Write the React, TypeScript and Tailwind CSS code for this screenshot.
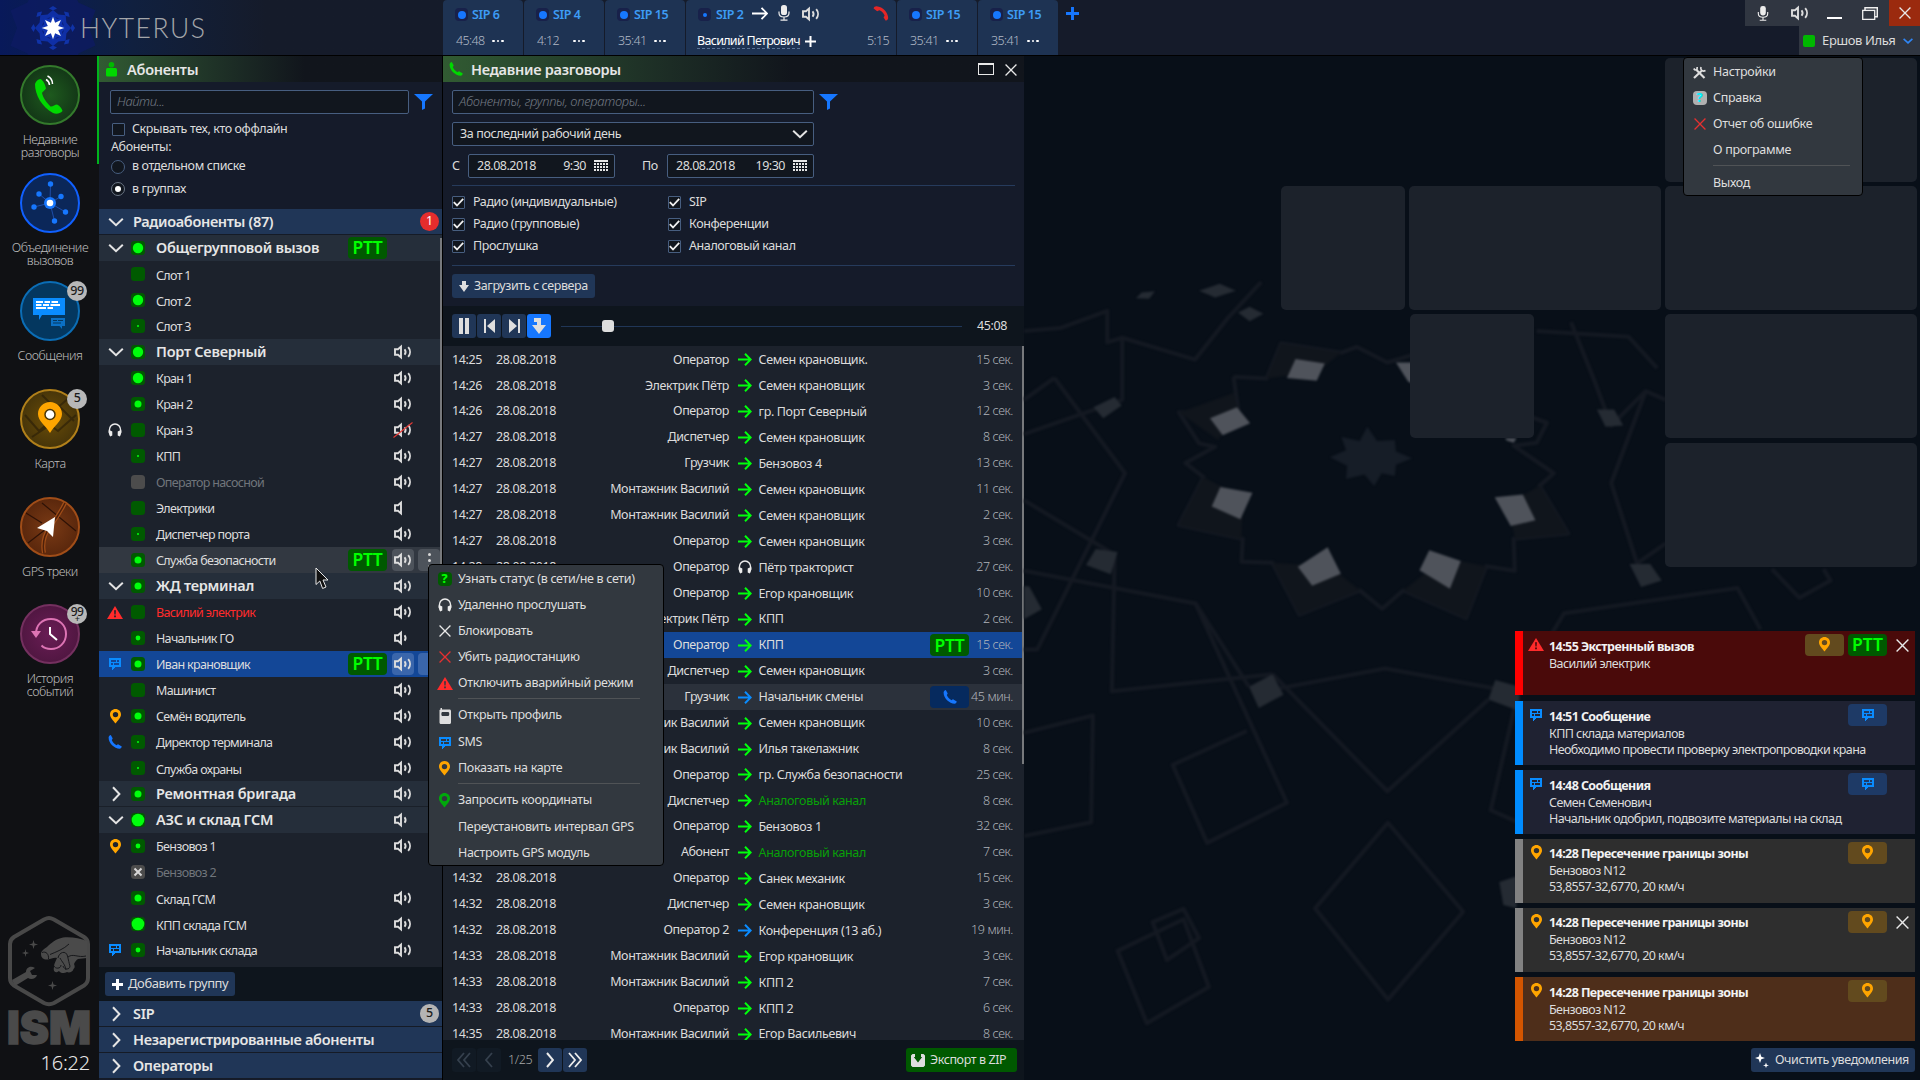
import React from 'react';

type IconProps = { className?: string };

/* ---------- Icons ---------- */

function Speaker({ level = 2, muted = false }: { level?: number; muted?: boolean }) {
  return (
    <svg width="20" height="16" viewBox="-1 -1 20 16" fill="none" stroke="#dedede" strokeWidth="1.9">
      <path d="M1 4.3H4L7 1.6V12.4L4 9.7H1Z" />
      {level > 0 && <path d="M10.6 4.2C11.9 6 11.9 8 10.6 9.8" />}
      {level > 1 && <path d="M14.2 2.2C16.6 5 16.6 9 14.2 11.8" />}
      {muted && <path d="M-0.5 14.5L18.5 -0.5" stroke="#e53935" strokeWidth="1.1" />}
    </svg>
  );
}

function Chevron({ dir, className = '' }: { dir: 'down' | 'right'; className?: string }) {
  return (
    <svg width="16" height="16" viewBox="0 0 16 16" fill="none" stroke="#e4e4e4" strokeWidth="2" className={className}>
      <path d={dir === 'down' ? 'M1.2 4.8L8 11.2L14.8 4.8' : 'M5 1.2L11.4 8L5 14.8'} />
    </svg>
  );
}

function Cross({ color = '#e8e8e8', size = 13 }: { color?: string; size?: number }) {
  return (
    <svg width={size} height={size} viewBox="0 0 13 13" stroke={color} strokeWidth="1.4">
      <path d="M.6 .6L12.4 12.4M12.4 .6L.6 12.4" />
    </svg>
  );
}

function Message({ bg = '#1c222c' }: { bg?: string }) {
  return (
    <svg width="12" height="12" viewBox="0 0 12 12" shapeRendering="crispEdges">
      <path d="M0 0H12V9H6L3 12V9H0Z" fill="#0a8cff" />
      <path d="M2 2h5v2H2zM8 2h2v2H8zM2 5h2v2H2zM5 5h5v2H5z" fill={bg} />
    </svg>
  );
}

function Pin({ color = '#ffa500' }: { color?: string }) {
  return (
    <svg width="11" height="15" viewBox="0 0 11 15">
      <path
        fillRule="evenodd"
        fill={color}
        d="M5.5 0C8.6 0 11 2.4 11 5.4C11 8.6 7.6 11.4 5.5 14.4C3.4 11.4 0 8.6 0 5.4C0 2.4 2.4 0 5.5 0ZM5.5 2.9A2.7 2.7 0 1 0 5.5 8.3A2.7 2.7 0 1 0 5.5 2.9Z"
      />
    </svg>
  );
}

function Handset({ color, size = 14, className = '' }: { color: string; size?: number; className?: string }) {
  return (
    <svg width={size} height={size} viewBox="0 0 14 14" className={className}>
      <path
        fill={color}
        d="M.6 2.2C.8 1.2 1.8 .2 2.8 0L4.6 3.2C4.8 3.8 4 4.4 3.8 5C4.4 7 6.6 9.4 8.6 10.2C9.2 10 9.8 9.2 10.4 9.4L13.8 11.4C13.6 12.4 12.8 13.4 11.6 13.8C6.4 13.6 .4 8 .6 2.2Z"
      />
    </svg>
  );
}

function Headphones() {
  return (
    <svg width="14" height="14" viewBox="0 0 14 14">
      <path d="M1.4 10V7C1.4 3.6 3.8 1 7 1S12.600 3.600 12.600 7V10" fill="none" stroke="#ececec" strokeWidth="1.4" />
      <path d="M.6 7.600H2.200L4.300 8.600V12.600L2.200 13.400C1 12.400 .6 9.600 .6 7.600ZM13.400 7.600H11.800L9.700 8.600V12.600L11.800 13.400C13 12.400 13.400 9.600 13.400 7.600Z" fill="#ececec" />
    </svg>
  );
}

function Warning({ mark = '#1c222c' }: { mark?: string }) {
  return (
    <svg width="16" height="13" viewBox="0 0 16 13">
      <path d="M8 0L16 13H0Z" fill="#ff2b2b" />
      <path d="M7.100 4.200H8.900L8.600 8.500H7.400ZM7.100 9.500H8.900V11.200H7.100Z" fill={mark} />
    </svg>
  );
}

function Arrow({ color }: { color: string }) {
  return (
    <svg width="14" height="13" viewBox="0 0 14 13" fill="none" stroke={color} strokeWidth="2">
      <path d="M0 6.500H12.500M7 .8L12.700 6.500L7 12.200" />
    </svg>
  );
}

function Funnel() {
  return (
    <svg width="19" height="16" viewBox="0 0 19 16">
      <path d="M0 0H19L11 7.500V14.500L8 16V7.500Z" fill="#1677ff" />
    </svg>
  );
}

function Calendar() {
  return (
    <svg width="14" height="12" viewBox="0 0 14 12" shapeRendering="crispEdges" fill="#e6e6e6">
      <path d="M0 0h14v2H0z" />
      {[3, 6, 9].map((y) => [0, 3, 6, 9, 12].map((x) => <rect key={x + '-' + y} x={x} y={y} width="2" height="2" />))}
    </svg>
  );
}

function Mic({ className = '' }: IconProps) {
  return (
    <svg width="12" height="16" viewBox="0 0 12 16" className={className}>
      <rect x="3" y="0" width="6" height="10" rx="2.600" fill="#ececec" />
      <path d="M1 6.500V8C1 10.500 3 12 6 12S11 10.500 11 8V6.500M6 12V15M2.500 15.200H9.500" fill="none" stroke="#ececec" strokeWidth="1.200" />
    </svg>
  );
}

function Plus({ color = '#fff', size = 11, w = 3 }: { color?: string; size?: number; w?: number }) {
  return (
    <svg width={size} height={size} viewBox="0 0 11 11" stroke={color} strokeWidth={w}>
      <path d="M5.500 0V11M0 5.500H11" />
    </svg>
  );
}

function Radio() {
  return (
    <svg width="12" height="16" viewBox="0 0 12 16">
      <path fillRule="evenodd" fill="#dedede" d="M1.500 0H3V1.500H10.500C11.400 1.500 12 2.200 12 3V14.500C12 15.300 11.400 16 10.500 16H2C1 16 .5 15.300 .5 14.500V2L1.500 1.500ZM3 4L2.400 5V7L3 8H9.500L10.200 7V5L9.500 4Z" />
    </svg>
  );
}

function Tools() {
  return (
    <svg width="13" height="13" viewBox="0 0 13 13" fill="none" stroke="#dedede">
      <path d="M3.500 4L11.500 12" strokeWidth="2.200" />
      <path d="M1 12L9 4.500" strokeWidth="2.200" />
      <path d="M.8 2.500C2 4.800 4.500 4.500 4.200 1" strokeWidth="1.700" />
      <path d="M8 1C7 4 9.500 6 12.500 4.500" strokeWidth="1.700" />
    </svg>
  );
}

/* ---------- Small widgets ---------- */

function Ptt() {
  return (
    <div className="flex h-[22px] w-[39px] shrink-0 items-center justify-center rounded bg-[#005900] text-[17.5px] font-semibold leading-none text-[#00ff00]">
      PTT
    </div>
  );
}

type DotKind = 'off' | 'full' | 'mid' | 'small' | 'tiny' | 'big' | 'grey' | 'x';

function Dot({ kind }: { kind: DotKind }) {
  const r: Record<string, number> = { full: 5.200, mid: 3.500, small: 2.400, tiny: 1, big: 6.300 };
  return (
    <svg width="14" height="14" viewBox="0 0 14 14" className="shrink-0">
      <rect width="14" height="14" rx="3.500" fill={kind === 'grey' || kind === 'x' ? '#4c4c4c' : '#005a00'} />
      {r[kind] && <circle cx="7" cy="7" r={r[kind]} fill="#00ff0c" />}
      {kind === 'x' && <path d="M3.500 3.500L10.500 10.500M10.500 3.500L3.500 10.500" stroke="#d8d8d8" strokeWidth="2" />}
    </svg>
  );
}

function Check({ on = true }: { on?: boolean }) {
  return (
    <div className="flex h-[13px] w-[13px] shrink-0 items-center justify-center rounded-[1px] border border-[#475e80] bg-[#11161e]">
      {on && (
        <svg width="11" height="9" viewBox="0 0 11 9" fill="none" stroke="#f0f0f0" strokeWidth="1.800">
          <path d="M.8 4.200L4 7.500L10.200 .8" />
        </svg>
      )}
    </div>
  );
}

/* ---------- Top bar ---------- */

function starPoints(cx: number, cy: number, R: number, r: number, n: number, rot = 0) {
  return Array.from({ length: n * 2 }, (_, i) => {
    const a = (Math.PI * i) / n - Math.PI / 2 + rot;
    const q = i % 2 ? r : R;
    return (cx + q * Math.cos(a)).toFixed(1) + ',' + (cy + q * Math.sin(a)).toFixed(1);
  }).join(' ');
}

function Logo() {
  return (
    <div className="flex h-[55px] w-[443px] items-center bg-gradient-to-r from-[#08195a] via-[#10203f] via-30% to-[#151b2a] to-60%">
      <svg width="96" height="55" viewBox="0 0 96 55" className="shrink-0">
        <polygon points={starPoints(53, 28, 46, 36, 8, 0.390)} fill="#0d1b63" opacity=".75" />
        <polygon points={starPoints(53, 28, 18, 14.500, 8)} fill="#0f2fa5" />
        <circle cx="53" cy="28" r="11" fill="#0b1d70" />
        <polygon points={starPoints(53, 28, 13, 10, 8)} fill="#1033b0" />
        {Array.from({ length: 8 }, (_, i) => (
          <path key={i} d="M53 6L57 8.500L53 10.500L49 8.500Z" fill="#1033a8" transform={`rotate(${i * 45} 53 28)`} />
        ))}
        <polygon points={starPoints(53, 28, 11.300, 5.600, 8)} fill="#fff" />
      </svg>
      <span className="-ml-[16px] pt-[2px] font-['Lato'] text-[26.5px] font-light tracking-[1.5px] text-[#a4a6aa]">HYTERUS</span>
    </div>
  );
}

function Dots() {
  return (
    <span className="flex gap-[2px]">
      <i className="h-[2.500px] w-[2.500px] rounded-full bg-white" />
      <i className="h-[2.500px] w-[2.500px] rounded-full bg-white" />
      <i className="h-[2.500px] w-[2.500px] rounded-full bg-white" />
    </span>
  );
}

function SipTab({ name, time }: { name: string; time: string }) {
  return (
    <div className="mr-px flex h-[55px] w-[80px] flex-col rounded-t bg-[#1e3353]">
      <div className="flex h-[29px] items-center pl-[12px]">
        <div className="flex h-[13px] w-[13px] items-center justify-center rounded bg-[#18214a]">
          <div className="h-2 w-2 rounded-full bg-[#1677ff]" />
        </div>
        <span className="pl-1 pt-px text-[12.5px] font-semibold tracking-[-0.4px] text-[#3d9cf5]">{name}</span>
      </div>
      <div className="flex h-6 items-center pl-[13px] text-[12.5px] font-light tracking-[-0.6px] text-[#b2bac7]">
        <span className="w-9">{time}</span>
        <Dots />
      </div>
    </div>
  );
}

function ActiveCall() {
  return (
    <div className="mr-px flex h-[55px] w-[210px] flex-col rounded-t bg-[#1e3353] pr-[7px]">
      <div className="flex h-[29px] items-center pl-[12px]">
        <div className="flex h-[13px] w-[13px] items-center justify-center rounded bg-[#18214a]">
          <div className="h-1 w-1 rounded-full bg-[#1677ff]" />
        </div>
        <span className="w-[41px] pl-[5px] pt-px text-[12.5px] font-semibold tracking-[-0.4px] text-[#3d9cf5]">SIP 2</span>
        <svg width="16" height="13" viewBox="0 0 16 13" fill="none" stroke="#fff" strokeWidth="1.800" className="-mt-[2px]">
          <path d="M0 6.500H15M9.500 .8L15 6.500L9.500 12.200" />
        </svg>
        <Mic className="-mt-[3px] ml-[10px] mr-[11px]" />
        <div className="-mt-[2px]"><Speaker /></div>
        <svg width="16" height="15" viewBox="0 0 16 15" className="-mt-[2px] ml-auto">
          <path d="M.6 2.400C1 1 2.200 .2 3.600 .3C10 1 15 6.600 15.200 12C15 13.400 14.200 14.400 12.800 14.700L10.600 11.600C10.600 10.800 11.700 10.400 11.600 9.600C10.600 7 8.600 5 6.400 4.300C5.600 4.200 5 5.100 4.200 5.200Z" fill="#e52626" />
        </svg>
      </div>
      <div className="flex h-6 items-center pl-[11px] text-[12.5px]">
        <span className="mr-[5px] border-b border-dashed border-[#5a7396] leading-[15px] tracking-[-0.7px] text-white">Василий Петрович</span>
        <Plus size={11} w={2} />
        <span className="ml-auto font-light tracking-[-0.6px] text-[#b2bac7]">5:15</span>
      </div>
    </div>
  );
}

function TopBar() {
  return (
    <header className="flex h-14 shrink-0 border-b border-black bg-[#151b2a]">
      <Logo />
      <SipTab name="SIP 6" time="45:48" />
      <SipTab name="SIP 4" time="4:12" />
      <SipTab name="SIP 15" time="35:41" />
      <ActiveCall />
      <SipTab name="SIP 15" time="35:41" />
      <SipTab name="SIP 15" time="35:41" />
      <div className="pl-[7px] pt-[7px]">
        <Plus color="#1677ff" size={13} w={2.500} />
      </div>
      <div className="ml-auto flex flex-col items-end">
        <div className="flex h-[26px] w-[175px] bg-[#303641]">
          <div className="flex w-9 items-center justify-center"><Mic className="h-[15px]" /></div>
          <div className="flex w-[37px] items-center justify-center"><Speaker /></div>
          <div className="flex w-[33px] items-end justify-center pb-[7px]"><div className="h-[2px] w-[15px] bg-white" /></div>
          <div className="flex w-[38px] items-center justify-center">
            <svg width="16" height="13" viewBox="0 0 16 13" fill="none" stroke="#f0f0f0" strokeWidth="1.300">
              <rect x=".7" y="3.400" width="12" height="9" />
              <path d="M3 3V.7H15.300V9.700H13" strokeWidth="1.500" />
            </svg>
          </div>
          <div className="flex flex-1 items-center justify-center bg-[#9b2a0e]"><Cross size={12} /></div>
        </div>
        <div className="flex h-[29px] w-[121px] items-center bg-[#303641] pl-1">
          <div className="h-3 w-3 rounded-[2px] bg-[#00b800]" />
          <span className="w-[88px] pl-[7px] text-[13px] tracking-[-0.35px] text-[#dcdcdc]">Ершов Илья</span>
          <svg width="10" height="6" viewBox="0 0 10 6" fill="none" stroke="#2f86f5" strokeWidth="1.600"><path d="M.6 .8L5 4.800L9.400 .8" /></svg>
        </div>
      </div>
    </header>
  );
}

/* ---------- Left rail ---------- */

function RailItem({ lines, ring, fill, badge, children }: { lines: string[]; ring: string; fill: string; badge?: React.ReactNode; children: React.ReactNode }) {
  return (
    <div className="flex h-[107.9px] w-full flex-col items-center pl-[3px]">
      <div className={`relative flex h-[60px] w-[60px] shrink-0 items-center justify-center rounded-full border-2 ${ring} ${fill}`}>
        {children}
        {badge && (
          <div className="absolute -right-[9px] -top-[2px] flex h-5 w-5 flex-col items-center justify-center rounded-full bg-[#b8b8b8] text-[12.5px] font-medium leading-none tracking-[-0.5px] text-[#1c1c1c]">{badge}</div>
        )}
      </div>
      <div className="mt-[8px] text-center text-[12.5px] font-light leading-[13px] tracking-[-0.45px] text-[#bcbcbc]">
        {lines.map((l) => (
          <div key={l}>{l}</div>
        ))}
      </div>
    </div>
  );
}

function Rail() {
  return (
    <nav className="flex w-[97px] shrink-0 flex-col bg-[#101114] pt-[9px]">
      <RailItem lines={['Недавние', 'разговоры']} ring="border-[#347a2c]" fill="bg-[radial-gradient(circle,#1e5a1e,#0f2a14)]">
        <svg width="40" height="48" viewBox="0 0 40 48">
          <path d="M5 13C6 10 8 8.500 10.500 8C13 9 15.500 14 16 17.500C15 19.500 12.500 20.500 12 22C13 27 17 32 20.500 35.500C22.500 36 25 33.500 27 33.500C30 35 32 37.500 32.500 40C30 42.500 26.500 43.500 23 42C12 36 5 24 5 13Z" fill="#00d800" />
          <path d="M16 8.500C18 9.500 19.300 11.500 19.500 14M17.500 5C20.500 6.500 22.500 9.500 22.500 13" fill="none" stroke="#fff" strokeWidth="1.500" />
        </svg>
      </RailItem>
      <RailItem lines={['Объединение', 'вызовов']} ring="border-[#1060ff]" fill="bg-[#0b2759]">
        <svg width="56" height="56" viewBox="0 0 56 56">
          <g stroke="#1d4da8" strokeWidth="1">
            <path d="M28 28L28.500 9M28 28L17 19M28 28L39 21.500M28 28L12 32M28 28L43.500 37M28 28L32.500 46" />
          </g>
          <g fill="#1677ff">
            <circle cx="28" cy="28" r="6" /><circle cx="28.500" cy="9" r="2.700" /><circle cx="17" cy="19" r="2.700" /><circle cx="39" cy="21.500" r="2.700" />
            <circle cx="12" cy="32" r="2.700" /><circle cx="43.500" cy="37" r="2.700" /><circle cx="32.500" cy="46" r="2.700" />
          </g>
          <circle cx="28" cy="28" r="3.300" fill="#fff" />
        </svg>
      </RailItem>
      <RailItem lines={['Сообщения']} ring="border-[#0b6db5]" fill="bg-[#04375f]" badge="99">
        <svg width="56" height="56" viewBox="0 0 56 56">
          <path d="M11 15H43V32H20L17 37V32H11Z" fill="#0a8cff" />
          <path d="M29 35H43V43H40V46L37.500 43H29Z" fill="#0b70c4" />
          <path d="M14 19H21M22.500 19H28M29.500 19H36M14 22H19.500M21 22H27M28.500 22H38M14 25H24M25.500 25H31" stroke="#fff" strokeWidth="1.900" />
          <path d="M31 37.500H35M36 37.500H41M31 40H39" stroke="#04375f" strokeWidth="1.100" />
        </svg>
      </RailItem>
      <RailItem lines={['Карта']} ring="border-[#b1801a]" fill="bg-[radial-gradient(circle,#6a4d08,#3a2c0a)]" badge="5">
        <svg width="56" height="56" viewBox="0 0 56 56">
          <path d="M3 24L17 40L24 34M20 4L34 18L48 6M36 14L52 30M10 46L28 34L36 40L54 24" fill="none" stroke="#2d2108" strokeWidth="2" opacity=".7" />
          <path d="M28 11C34.500 11 40 16 40 23C40 30 32 35 28 42C24 35 16 30 16 23C16 16 21.500 11 28 11Z" fill="#ffa500" />
          <circle cx="28" cy="23.500" r="5" fill="#fff" stroke="#4a3508" strokeWidth="1.500" />
        </svg>
      </RailItem>
      <RailItem lines={['GPS треки']} ring="border-[#a04d18]" fill="bg-[radial-gradient(circle,#7a3a15,#4e2009)]">
        <svg width="56" height="56" viewBox="0 0 56 56">
          <path d="M4 14L20 24M20 4L54 32M24 30L6 44" stroke="#2e1206" strokeWidth="1.200" />
          <path d="M43 4C38 14 34 20 28 28C22 36 20 44 22 54" fill="none" stroke="#a04d18" strokeWidth="4" />
          <path d="M43 4C38 14 34 20 28 28C22 36 20 44 22 54" fill="none" stroke="#4e2009" strokeWidth="1.500" />
          <path d="M33 18L15 29L25 32L31 38Z" fill="#fff" />
        </svg>
      </RailItem>
      <RailItem
        lines={['История', 'событий']}
        ring="border-[#74305f]"
        fill="bg-[radial-gradient(circle,#6a1d55,#47143a)]"
        badge={<><span className="text-[12px] leading-[10px]">99</span><span className="text-[9px] leading-[4px]">+</span></>}
      >
        <svg width="56" height="56" viewBox="0 0 56 56" fill="none">
          <path d="M14 28C14 19 20 13 29 13C37 13 44 19 44 28C44 37 37 43 29 43C25 43 22 42 19.500 39.500" stroke="#dd74b4" strokeWidth="2" />
          <path d="M9 25H19L14 32Z" fill="#dd74b4" />
          <path d="M28 21V28L35 34" stroke="#fff" strokeWidth="2" />
        </svg>
      </RailItem>
      <div className="mt-auto flex flex-col items-end pb-[5px] pr-[7px]">
        <svg width="82" height="130" viewBox="0 0 82 130" className="overflow-visible">
          <path d="M41 2C43 2 44 2.500 46 3.500L76 21C79 23 80 24.500 80 28V62C80 66 79 67.500 76 69.500L46 87C43 88.500 39 88.500 36 87L6 69.500C3 67.500 2 66 2 62V28C2 24.500 3 23 6 21L36 3.500C38 2.500 39 2 41 2Z" fill="none" stroke="#484848" strokeWidth="4" />
          <path d="M33 38C33 35 36 33 39 31C43 27 48 23 55 21.500C62 20.500 72 22 79 25V42L70 43C68 44 67 46 66 48C67 50 67 52 65.500 53C65 56 61 57 59 56C56 58 52 57 51 55C47 58 45 55 46 51C46 47 48 45 49 42C46 41 43 43 40 43.500C36 44 33 42 33 38Z" fill="#4a4a4a" />
          <path d="M34 36.500C38 35 41 38 40.500 43M42 38.500C48 36 56 33 61 28M50 42C51 36 58 34 59.500 40C60.500 44 61 47 62 50M52 42C54 46 57 48 58 54M53 49C53 53 47 53 46 50M62 50C62 54 56 54 55 50M60 41C65 37 70 42 78 40" fill="none" stroke="#17181b" strokeWidth="1" />
          <path d="M4 64L18 56C18 52 22 49 27 52L22 55L24 59L29 59C28 63 23 64 20 62L7 70Z" fill="#4a4a4a" />
          <path d="M25.500 24L26.500 27.500L30 28.500L26.500 29.500L25.500 33L24.500 29.500L21 28.500L24.500 27.500ZM17.500 33L18.200 36L21 37L18.200 38L17.500 41L16.800 38L14 37L16.800 36ZM44.500 65L45.500 68.500L49 69.500L45.500 70.500L44.500 74L43.500 70.500L40 69.500L43.500 68.500Z" fill="#4a4a4a" />
          <text x="-1" y="128" textLength="84" lengthAdjust="spacingAndGlyphs" fontFamily="Inter" fontWeight="900" fontSize="45" fill="#4a4a4a" stroke="#4a4a4a" strokeWidth="1.5">ISM</text>
        </svg>
        <span className="mt-[4px] text-[20px] font-light leading-[25px] tracking-[-0.2px] text-[#e8e8e8]">16:22</span>
      </div>
    </nav>
  );
}

/* ---------- Subscribers panel ---------- */

type Sub = {
  n: string; dot: DotKind; icon?: React.ReactNode; group?: 'down' | 'right'; vol?: number; muted?: boolean;
  ptt?: boolean; tone?: string; bg?: string; btn?: string; line?: boolean; drop?: string;
};

const SUBS: Sub[] = [
  { n: 'Общегрупповой вызов', dot: 'full', group: 'down', ptt: true },
  { n: 'Слот 1', dot: 'off', drop: 'pt-[5px]' },
  { n: 'Слот 2', dot: 'full', drop: 'pt-[5px]' },
  { n: 'Слот 3', dot: 'tiny' },
  { n: 'Порт Северный', dot: 'full', group: 'down', vol: 2 },
  { n: 'Кран 1', dot: 'full', vol: 2 },
  { n: 'Кран 2', dot: 'mid', vol: 2 },
  { n: 'Кран 3', dot: 'off', vol: 2, muted: true, icon: <Headphones /> },
  { n: 'КПП', dot: 'tiny', vol: 2 },
  { n: 'Оператор насосной', dot: 'grey', vol: 2, tone: 'text-[#70757b]' },
  { n: 'Электрики', dot: 'off', vol: 0 },
  { n: 'Диспетчер порта', dot: 'tiny', vol: 2 },
  { n: 'Служба безопасности', dot: 'mid', vol: 2, ptt: true, bg: 'bg-[#323841]', btn: 'bg-[#4d535b]' },
  { n: 'ЖД терминал', dot: 'mid', group: 'down', vol: 2 },
  { n: 'Василий электрик', dot: 'off', vol: 2, tone: 'text-[#ff2b2b]', icon: <Warning /> },
  { n: 'Начальник ГО', dot: 'small', vol: 1 },
  { n: 'Иван крановщик', dot: 'mid', vol: 2, ptt: true, bg: 'bg-[#134797]', btn: 'bg-[#3a66ab]', icon: <Message bg="#134797" /> },
  { n: 'Машинист', dot: 'off', vol: 2 },
  { n: 'Семён водитель', dot: 'mid', vol: 2, icon: <Pin /> },
  { n: 'Директор терминала', dot: 'tiny', vol: 2, icon: <Handset color="#1677ff" /> },
  { n: 'Служба охраны', dot: 'tiny', vol: 2, drop: 'pt-[4px]' },
  { n: 'Ремонтная бригада', dot: 'mid', group: 'right', vol: 2, line: true },
  { n: 'АЗС и склад ГСМ', dot: 'big', group: 'down', vol: 1 },
  { n: 'Бензовоз 1', dot: 'small', vol: 2, icon: <Pin /> },
  { n: 'Бензовоз 2', dot: 'x', tone: 'text-[#70757b]' },
  { n: 'Склад ГСМ', dot: 'mid', vol: 2, drop: 'pt-[4px]' },
  { n: 'КПП склада ГСМ', dot: 'big', vol: 2, drop: 'pt-[4px]' },
  { n: 'Начальник склада', dot: 'small', vol: 2, icon: <Message /> },
];

function SubRow({ s }: { s: Sub }) {
  return (
    <div className={`flex h-[26px] shrink-0 items-center ${s.bg ?? (s.group ? 'bg-[#252e3a]' : '')} ${s.line ? 'border-b border-[#1a2029]' : ''}`}>
      <div className="flex w-8 items-center justify-center">{s.group ? <Chevron dir={s.group} className="ml-[2px]" /> : s.icon}</div>
      <Dot kind={s.dot} />
      <span className={`w-[192px] shrink-0 whitespace-nowrap pl-[11px] ${s.group ? 'text-[14.5px] font-semibold tracking-[-0.25px] text-[#e6e6e6]' : 'text-[12.5px] tracking-[-0.67px]'} ${s.group ? '' : s.drop ?? 'pt-[2px]'} ${s.tone ?? 'text-[#dcdcdc]'}`}>
        {s.n}
      </span>
      <div className="ml-[11px] w-[44px]">{s.ptt && <Ptt />}</div>
      <div className={`flex h-[22px] w-[22px] items-center justify-center rounded ${s.btn ?? ''}`}>
        {s.vol !== undefined && <Speaker level={s.vol} muted={s.muted} />}
      </div>
      {s.btn && (
        <div className={`ml-1 flex h-[22px] w-[22px] shrink-0 flex-col items-center justify-center gap-[3px] rounded ${s.btn}`}>
          <i className="h-[3px] w-[3px] rounded-full bg-[#d8d8d8]" />
          <i className="h-[3px] w-[3px] rounded-full bg-[#d8d8d8]" />
          <i className="h-[3px] w-[3px] rounded-full bg-[#d8d8d8]" />
        </div>
      )}
    </div>
  );
}

function Section({ title, open, badge }: { title: string; open?: boolean; badge?: React.ReactNode }) {
  return (
    <div className="flex h-[26px] shrink-0 items-center border-b border-[#151b26] bg-[#203657] pl-[9px] pr-[3px]">
      <Chevron dir={open ? 'down' : 'right'} />
      <span className="flex-1 pl-[9px] text-[14.5px] font-semibold tracking-[-0.33px] text-[#e6e6e6]">{title}</span>
      {badge}
    </div>
  );
}

function PanelTitle({ children }: { children: React.ReactNode }) {
  return (
    <div className="flex h-[26px] shrink-0 items-center bg-[#11151c] bg-gradient-to-r from-[#315b32] to-[#11151c] to-60% pt-[2px] text-[14.5px] font-semibold tracking-[-0.25px] text-[#e6e6e6]">
      {children}
    </div>
  );
}

function Subscribers() {
  return (
    <section className="flex w-[344px] shrink-0 flex-col border-r border-black bg-[#151b2a] text-[12.5px] tracking-[-0.4px] text-[#dcdcdc]">
      <PanelTitle>
        <svg width="11" height="15" viewBox="0 0 11 15" className="-mt-[2px] ml-[7px] mr-[10px]">
          <circle cx="5.500" cy="2.800" r="2.800" fill="#00b800" />
          <rect y="6" width="11" height="8.500" rx="1.500" fill="#00d800" />
        </svg>
        Абоненты
      </PanelTitle>
      <div className="flex h-[127px] shrink-0 flex-col pl-[11px] pt-2">
        <div className="flex items-center">
          <div className="flex h-6 w-[299px] items-center rounded-[2px] border border-[#475e80] bg-[#11161e] pl-[6px] text-[13px] font-light italic text-[#727983]">Найти...</div>
          <div className="ml-[5px]"><Funnel /></div>
        </div>
        <label className="mt-[6px] flex h-[18px] items-center pl-[2px]"><Check on={false} /><span className="pl-[7px] pt-px">Скрывать тех, кто оффлайн</span></label>
        <div className="flex h-[18px] items-center pl-[1px] pt-px">Абоненты:</div>
        <div className="flex h-5 items-center pl-px pt-px"><i className="h-[14px] w-[14px] rounded-full border border-[#475e80] bg-[#11161e]" /><span className="pl-[7px]">в отдельном списке</span></div>
        <div className="mt-[2px] flex h-5 items-center pl-px pt-[2px]"><i className="flex h-[14px] w-[14px] items-center justify-center rounded-full border border-[#6b7685] bg-[#11161e]"><b className="h-[6px] w-[6px] rounded-full bg-white" /></i><span className="pl-[7px]">в группах</span></div>
      </div>
      <Section title="Радиоабоненты (87)" open badge={<div className="flex h-[19px] w-[19px] items-center justify-center rounded-full bg-[#e52d2d] text-[12.5px] text-white">1</div>} />
      <div className="relative flex h-[732px] shrink-0 flex-col overflow-hidden bg-[#1c222c]">
        {SUBS.map((s) => <SubRow key={s.n} s={s} />)}
        <div className="absolute right-0 top-[3px] h-[340px] w-[2px] bg-[#77797c]" />
      </div>
      <div className="flex h-[34px] shrink-0 items-center bg-[#0e151d] pl-[6px]">
        <button className="flex h-6 w-[130px] items-center rounded-[3px] bg-[#203657] pl-[7px] text-[13px]"><Plus /><span className="pl-[5px]">Добавить группу</span></button>
      </div>
      <Section title="SIP" badge={<div className="flex h-[19px] w-[19px] items-center justify-center rounded-full bg-[#b4b4b4] text-[12.5px] font-medium text-[#1c1c1c]">5</div>} />
      <Section title="Незарегистрированные абоненты" />
      <Section title="Операторы" />
    </section>
  );
}

/* ---------- Recent calls panel ---------- */

type Call = { t: string; a: string; b: string; d: string; kind?: 'blue' | 'ear'; green?: boolean; bg?: string; badge?: 'ptt' | 'phone' };

const CALLS: Call[] = [
  { t: '14:25', a: 'Оператор', b: 'Семен крановщик.', d: '15 сек.' },
  { t: '14:26', a: 'Электрик Пётр', b: 'Семен крановщик', d: '3 сек.' },
  { t: '14:26', a: 'Оператор', b: 'гр. Порт Северный', d: '12 сек.' },
  { t: '14:27', a: 'Диспетчер', b: 'Семен крановщик', d: '8 сек.' },
  { t: '14:27', a: 'Грузчик', b: 'Бензовоз 4', d: '13 сек.' },
  { t: '14:27', a: 'Монтажник Василий', b: 'Семен крановщик', d: '11 сек.' },
  { t: '14:27', a: 'Монтажник Василий', b: 'Семен крановщик', d: '2 сек.' },
  { t: '14:27', a: 'Оператор', b: 'Семен крановщик', d: '3 сек.' },
  { t: '14:28', a: 'Оператор', b: 'Пётр тракторист', d: '27 сек.', kind: 'ear' },
  { t: '14:28', a: 'Оператор', b: 'Егор крановщик', d: '10 сек.' },
  { t: '14:28', a: 'Электрик Пётр', b: 'КПП', d: '2 сек.' },
  { t: '14:29', a: 'Оператор', b: 'КПП', d: '15 сек.', bg: 'bg-[#134797]', badge: 'ptt' },
  { t: '14:29', a: 'Диспетчер', b: 'Семен крановщик', d: '3 сек.' },
  { t: '14:29', a: 'Грузчик', b: 'Начальник смены', d: '45 мин.', kind: 'blue', bg: 'bg-[#2b313b]', badge: 'phone' },
  { t: '14:30', a: 'Монтажник Василий', b: 'Семен крановщик', d: '10 сек.' },
  { t: '14:30', a: 'Монтажник Василий', b: 'Илья такелажник', d: '8 сек.' },
  { t: '14:30', a: 'Оператор', b: 'гр. Служба безопасности', d: '25 сек.' },
  { t: '14:31', a: 'Диспетчер', b: 'Аналоговый канал', d: '8 сек.', green: true },
  { t: '14:31', a: 'Оператор', b: 'Бензовоз 1', d: '32 сек.' },
  { t: '14:31', a: 'Абонент', b: 'Аналоговый канал', d: '7 сек.', green: true },
  { t: '14:32', a: 'Оператор', b: 'Санек механик', d: '15 сек.' },
  { t: '14:32', a: 'Диспетчер', b: 'Семен крановщик', d: '3 сек.' },
  { t: '14:32', a: 'Оператор 2', b: 'Конференция (13 аб.)', d: '19 мин.', kind: 'blue' },
  { t: '14:33', a: 'Монтажник Василий', b: 'Егор крановщик', d: '3 сек.' },
  { t: '14:33', a: 'Монтажник Василий', b: 'КПП 2', d: '7 сек.' },
  { t: '14:33', a: 'Оператор', b: 'КПП 2', d: '6 сек.' },
  { t: '14:35', a: 'Монтажник Василий', b: 'Егор Васильевич', d: '8 сек.' },
];

function CallRow({ c }: { c: Call }) {
  return (
    <div className={`flex h-[25.95px] shrink-0 items-center whitespace-nowrap pl-[9px] pr-[11px] ${c.bg ?? ''}`}>
      <span className="w-[44px]">{c.t}</span>
      <span className="w-[64px] tracking-[-0.4px]">28.08.2018</span>
      <span className="w-[169px] text-right">{c.a}</span>
      <span className="flex w-[29px] items-center pl-[9px]">{c.kind === 'ear' ? <Headphones /> : <Arrow color={c.kind === 'blue' ? '#0a8cff' : '#00ff0c'} />}</span>
      <span className={`flex-1 pl-[0.5px] pt-px tracking-[-0.35px] ${c.green ? 'text-[#08a008]' : ''}`}>{c.b}</span>
      {c.badge === 'ptt' && <Ptt />}
      {c.badge === 'phone' && <div className="flex h-[22px] w-[39px] items-center justify-center rounded bg-[#062a5e]"><Handset color="#1677ff" /></div>}
      <span className="w-[44px] text-right font-light text-[#b0b4ba]">{c.d}</span>
    </div>
  );
}

function DateBox({ date, time }: { date: string; time: string }) {
  return (
    <div className="flex h-6 w-[147px] items-center rounded-[2px] border border-[#475e80] bg-[#11161e] pl-2 pr-[6px] tracking-[-0.5px]">
      <span className="flex-1">{date}</span><span className="pr-2">{time}</span><Calendar />
    </div>
  );
}

function SquareButton({ children, tone }: { children: React.ReactNode; tone: string }) {
  return <button className={`flex h-6 w-6 items-center justify-center rounded-[3px] ${tone}`}>{children}</button>;
}

function RecentCalls() {
  return (
    <section className="flex w-[581px] shrink-0 flex-col bg-[#151b2a] text-[12.5px] tracking-[-0.4px] text-[#dcdcdc]">
      <PanelTitle>
        <Handset color="#00d800" className="-mt-[2px] ml-[6px] mr-[8px]" />
        <span className="flex-1">Недавние разговоры</span>
        <div className="-mt-[2px] mr-[11px] h-[12px] w-[16px] border border-t-2 border-[#e8e8e8]" />
        <div className="-mt-px mr-[7px]"><Cross size={12} /></div>
      </PanelTitle>
      <div className="flex h-[224px] shrink-0 flex-col px-[9px] pt-2">
        <div className="flex items-center">
          <div className="flex h-6 w-[362px] items-center rounded-[2px] border border-[#475e80] bg-[#11161e] pl-[6px] text-[13px] font-light italic tracking-[-0.3px] text-[#727983]">Абоненты, группы, операторы...</div>
          <div className="ml-[5px]"><Funnel /></div>
        </div>
        <div className="mt-2 flex h-6 w-[362px] items-center justify-between rounded-[2px] border border-[#475e80] bg-[#11161e] pl-[7px] pr-[5px]">
          За последний рабочий день<Chevron dir="down" />
        </div>
        <div className="mt-2 flex items-center">
          <span className="w-4">С</span><DateBox date="28.08.2018" time="9:30" />
          <span className="w-[52px] pl-[27px]">По</span><DateBox date="28.08.2018" time="19:30" />
        </div>
        <div className="mt-[7px] grid h-[81px] grid-cols-[216px_1fr] content-start gap-y-[4px] border-y border-[#263b5c] pt-[7px]">
          {['Радио (индивидуальные)', 'SIP', 'Радио (групповые)', 'Конференции', 'Прослушка', 'Аналоговый канал'].map((t) => (
            <label key={t} className="flex h-[18px] items-center"><Check /><span className="pl-2 pt-px">{t}</span></label>
          ))}
        </div>
        <button className="mt-2 flex h-6 w-[143px] items-center rounded-[3px] bg-[#203657] pl-[7px]">
          <svg width="10" height="11" viewBox="0 0 10 11"><path d="M3 0H7V4H10L5 11L0 4H3Z" fill="#dedede" /></svg>
          <span className="pl-[5px]">Загрузить с сервера</span>
        </button>
      </div>
      <div className="flex h-10 shrink-0 items-center gap-px bg-[#0e151d] pl-[9px] pr-[17px]">
        <SquareButton tone="bg-[#203657]"><svg width="10" height="16" fill="#dedede"><path d="M0 0h4v16H0zM6 0h4v16H6z" /></svg></SquareButton>
        <SquareButton tone="bg-[#203657]"><svg width="11" height="14" fill="#dedede"><path d="M0 0h2v14H0zM11 0V14L3 7z" /></svg></SquareButton>
        <SquareButton tone="bg-[#203657]"><svg width="11" height="14" fill="#dedede"><path d="M9 0h2v14H9zM0 0V14L8 7z" /></svg></SquareButton>
        <SquareButton tone="bg-[#1677ff]"><svg width="14" height="16" fill="#dedede"><path d="M2 0H9V7H14L7 16L0 7H5V4H2z" /></svg></SquareButton>
        <div className="ml-[9px] flex h-3 w-[401px] items-center bg-[linear-gradient(#203657,#203657)] bg-[length:100%_1px] bg-center bg-no-repeat pl-[41px]">
          <div className="h-3 w-3 rounded-[3px] bg-[#dedede]" />
        </div>
        <span className="ml-auto">45:08</span>
      </div>
      <div className="relative flex h-[694px] shrink-0 flex-col overflow-hidden bg-[#1c222c] pt-px">
        {CALLS.map((c, i) => <CallRow key={i} c={c} />)}
        <div className="absolute right-0 top-0 h-[418px] w-[2px] bg-[#77797c]" />
      </div>
      <div className="flex flex-1 items-center gap-px bg-[#0e151d] pl-[9px] pr-[7px]">
        <SquareButton tone="bg-[#111a24]"><svg width="14" height="16" fill="none" stroke="#35404d" strokeWidth="1.800"><path d="M7 1L1 8L7 15M13 1L7 8L13 15" /></svg></SquareButton>
        <SquareButton tone="bg-[#111a24]"><svg width="8" height="16" fill="none" stroke="#35404d" strokeWidth="1.800"><path d="M7 1L1 8L7 15" /></svg></SquareButton>
        <span className="w-[35px] pl-[6px] font-light text-[#a8a8a8]">1/25</span>
        <SquareButton tone="bg-[#203657]"><svg width="8" height="16" fill="none" stroke="#ececec" strokeWidth="2"><path d="M1 1L7 8L1 15" /></svg></SquareButton>
        <SquareButton tone="bg-[#203657]"><svg width="14" height="16" fill="none" stroke="#ececec" strokeWidth="1.800"><path d="M1 1L7 8L1 15M7 1L13 8L7 15" /></svg></SquareButton>
        <button className="ml-auto flex h-6 w-[111px] items-center rounded-[3px] bg-[#005900] pl-[5px]">
          <svg width="14" height="13" viewBox="0 0 14 13"><path d="M1.500 0H4V3H2.800L7 8.500L11.200 3H10V0H12.500L14 1.500V11.500L12.500 13H1.500L0 11.500V1.500Z" fill="#dedede" /><path d="M5.500 0H8.500V4H10L7 7.500L4 4H5.500Z" fill="#005900" /></svg>
          <span className="pl-[5px]">Экспорт в ZIP</span>
        </button>
      </div>
    </section>
  );
}

/* ---------- Desktop ---------- */

function Backdrop() {
  const bright = [
    '465,432 480,399 531,407 517,437', '655,405 690,405 690,445 676,438', '331,502 378,483 401,511 353,532', '334,656 349,622 405,632 384,678',
    '484,761 536,727 559,773 509,794', '713,732 768,751 749,799 696,767', '827,640 876,635 898,680 855,690', '845,537 865,537 860,545 848,541',
  ];
  const dim = [
    '128,483 165,465 177,480 145,502', '115,758 132,730 170,735 158,774', '399,970 440,948 459,984 416,1007', '828,958 870,970 870,1012 816,992',
    '1062,756 1098,756 1118,785 1082,796', '1005,487 1035,487 1051,515 1020,517', '312,280 348,268 376,280 340,292', '380,318 400,308 424,320 400,333', '0,795 16,795 38,835 0,856', '835,1310 865,1300 865,1356 842,1350', '202,293 212,283 235,281 225,294',
  ];
  const lines = [
    'M372 430L430 433L455 372L560 388L587 378L640 405L690 390M372 430L380 487L277 492L312 546L340 552L288 580L320 605L277 688L388 712L386 752L440 754L487 844L592 802L631 834L668 802L777 850L812 760L862 768L860 712L955 703L905 620L930 598L860 550L900 545L918 510L890 500',
    'M7 350L70 345L152 315L152 370L178 362L178 470L7 530M178 362L305 400L360 330L420 265M60 432L7 470M60 432L183 598L30 905L7 905M7 645L165 740L160 978L440 948M7 768L306 825L465 1172L326 1242L266 1106L395 1047M306 825L399 970M440 948L640 1152L816 992M440 975L636 938L840 975M7 1050L127 1020L124 1206L7 1230',
    'M641 1207L772 1362L641 1515L514 1356ZM170 1430L285 1375L329 1493L221 1556ZM231 1380L285 1357L312 1408L256 1446Z',
    'M870 970L948 842L1250 798L1290 870M870 970L820 1185L865 1205M960 335L1000 435L1030 515L1090 455L1125 470M1090 455L1030 615L1075 755L1125 720M1310 765L1358 815L1412 785L1400 765M900 350L1060 360L1110 415',
  ];
  return (
    <svg width="896" height="1024" viewBox="0 0 896 1024" className="absolute inset-0 blur-[1px]">
      <g transform="translate(-4 74) scale(.574)">
        {lines.map((d) => <path key={d} d={d} fill="none" stroke="#141922" strokeWidth="7" strokeLinejoin="round" />)}
        <path d="M277 492L372 458L380 487L345 540ZM277 688L320 605L388 640L386 712ZM440 754L487 844L592 802L540 760ZM668 802L777 850L812 760L740 745ZM862 712L955 703L905 620L850 650ZM430 433L455 372L560 388L520 420Z" fill="#10151c" />
        <polygon points="605,517 622,542 653,540 655,560 683,572 655,583 653,603 630,598 617,620 600,600 568,608 570,585 540,570 568,558 560,535 592,542" fill="#161d27" />
        {dim.map((p) => <polygon key={p} points={p} fill="#252b33" />)}
        {bright.map((p) => <polygon key={p} points={p} fill="#4f535b" />)}
      </g>
    </svg>
  );
}

type Note = { title: string; lines: string[]; tone: string; stripe: string; icon: React.ReactNode; badge: React.ReactNode; badgeTone?: string; extra?: React.ReactNode; close?: boolean; gap?: string; pad?: string };

const NOTES: Note[] = [
  { title: '14:55 Экстренный вызов', lines: ['Василий электрик'], tone: 'bg-[#4a0a0a]', stripe: 'bg-[#ff0000]', icon: <Warning mark="#4a0a0a" />, badge: <Pin />, badgeTone: 'bg-[#624a1e]', extra: <Ptt />, close: true, gap: 'mb-[6px]' },
  { title: '14:51 Сообщение', lines: ['КПП склада материалов', 'Необходимо провести проверку электропроводки крана'], tone: 'bg-[#1f2232]', stripe: 'bg-[#008cff]', icon: <Message bg="#1f2232" />, badge: <Message bg="#1e3a66" />, badgeTone: 'bg-[#1e3a66]' },
  { title: '14:48 Сообщения', lines: ['Семен Семенович', 'Начальник одобрил, подвозите материалы на склад'], tone: 'bg-[#1f2232]', stripe: 'bg-[#008cff]', icon: <Message bg="#1f2232" />, badge: <Message bg="#1e3a66" />, badgeTone: 'bg-[#1e3a66]' },
  { title: '14:28 Пересечение границы зоны', lines: ['Бензовоз N12', '53,8557-32,6770, 20 км/ч'], tone: 'bg-[#2e2e2e]', stripe: 'bg-[#828282]', icon: <Pin />, badge: <Pin />, badgeTone: 'bg-[#624a1e]', pad: 'pt-[7px]' },
  { title: '14:28 Пересечение границы зоны', lines: ['Бензовоз N12', '53,8557-32,6770, 20 км/ч'], tone: 'bg-[#2e2e2e]', stripe: 'bg-[#828282]', icon: <Pin />, badge: <Pin />, badgeTone: 'bg-[#624a1e]', close: true, pad: 'pt-[7px]' },
  { title: '14:28 Пересечение границы зоны', lines: ['Бензовоз N12', '53,8557-32,6770, 20 км/ч'], tone: 'bg-[#4e2e1a]', stripe: 'bg-[#d45500]', icon: <Pin />, badge: <Pin />, badgeTone: 'bg-[#624a1e]' },
];

function NoteCard({ n }: { n: Note }) {
  return (
    <article className={`flex h-16 w-[400px] ${n.gap ?? 'mb-[5px]'} ${n.tone}`}>
      <div className={`w-2 ${n.stripe}`} />
      <div className="flex h-[27px] w-[26px] items-center justify-center">{n.icon}</div>
      <div className={`w-0 flex-1 whitespace-nowrap text-[12.5px] leading-4 tracking-[-0.58px] text-[#dcdcdc] ${n.pad ?? 'pt-[8px]'}`}>
        <h3 className="mb-px font-bold text-[#f2f2f2]">{n.title}</h3>
        {n.lines.map((l) => <p key={l}>{l}</p>)}
      </div>
      <div className="flex h-[26px] items-center gap-1 pt-px">
        <div className={`flex h-[22px] w-[39px] items-center justify-center rounded ${n.badgeTone}`}>{n.badge}</div>
        {n.extra}
        <div className="flex w-[24px] justify-center pr-[2px] pt-px">{n.close && <Cross />}</div>
      </div>
    </article>
  );
}

function Desktop() {
  return (
    <main className="relative flex flex-1 flex-col bg-[#080f18]">
      <Backdrop />
      <div className="relative mr-[3px] mt-[2px] grid grid-cols-[repeat(5,124px)] grid-rows-[repeat(4,124px)] justify-end gap-1">
        <div className="col-span-2 col-start-4 rounded-[5px] bg-[#1c222b]" />
        <div className="col-start-1 row-start-2 rounded-[5px] bg-[#1c222b]" />
        <div className="col-span-2 col-start-2 row-start-2 rounded-[5px] bg-[#1c222b]" />
        <div className="col-span-2 col-start-4 row-start-2 rounded-[5px] bg-[#1c222b]" />
        <div className="col-start-2 row-start-3 ml-px -mr-px rounded-[5px] bg-[#1c222b]" />
        <div className="col-span-2 col-start-4 row-start-3 rounded-[5px] bg-[#1c222b]" />
        <div className="col-span-2 col-start-4 row-start-4 mt-px -mb-px rounded-[5px] bg-[#1c222b]" />
      </div>
      <div className="relative mr-[5px] mt-[65px] flex flex-col items-end">
        {NOTES.map((n, i) => <NoteCard key={i} n={n} />)}
        <button className="mt-[2px] flex h-6 w-[164px] items-center rounded-[3px] bg-[#203657] pl-1 text-[12.5px] tracking-[-0.4px] text-[#dcdcdc]">
          <svg width="14" height="15" viewBox="0 0 14 15" fill="#fff">
            <path d="M5 0L6.300 3.800L10 5L6.300 6.300L5 10L3.700 6.300L0 5L3.700 3.800ZM11 9.500L11.800 11.700L14 12.400L11.800 13.100L11 15L10.200 13.100L8 12.400L10.200 11.700Z" />
          </svg>
          <span className="pl-[6px]">Очистить уведомления</span>
        </button>
      </div>
    </main>
  );
}

/* ---------- Menus ---------- */

function MenuItem({ icon, label, h }: { icon?: React.ReactNode; label: string; h: string }) {
  return (
    <div className={`flex shrink-0 items-center ${h}`}>
      <span className="flex w-[29px] shrink-0 items-center justify-center pl-[2px]">{icon}</span>
      <span className="whitespace-nowrap">{label}</span>
    </div>
  );
}

function QuestionIcon({ bg, fg }: { bg: string; fg: string }) {
  return <span className={`flex h-[14px] w-[14px] items-center justify-center rounded-[4px] text-[12.5px] font-extrabold leading-none ${bg} ${fg}`}>?</span>;
}

function ContextMenu() {
  return (
    <div className="absolute left-[428px] top-[564px] flex h-[302px] w-[236px] flex-col rounded border border-black bg-[#32383f] pt-px text-[12.5px] tracking-[-0.33px] text-[#dedede]">
      <MenuItem h="h-[26px]" icon={<QuestionIcon bg="bg-[#005a00]" fg="text-[#00ff00]" />} label="Узнать статус (в сети/не в сети)" />
      <MenuItem h="h-[26px]" icon={<Headphones />} label="Удаленно прослушать" />
      <MenuItem h="h-[26px]" icon={<Cross size={12} />} label="Блокировать" />
      <MenuItem h="h-[26px]" icon={<Cross size={12} color="#e53030" />} label="Убить радиостанцию" />
      <MenuItem h="h-[26px]" icon={<Warning mark="#32383f" />} label="Отключить аварийный режим" />
      <div className="ml-[29px] mt-[2px] h-px w-[182px] shrink-0 bg-[#505356]" />
      <MenuItem h="h-[33px]" icon={<Radio />} label="Открыть профиль" />
      <MenuItem h="h-[21px]" icon={<Message bg="#32383f" />} label="SMS" />
      <MenuItem h="h-[30px]" icon={<Pin />} label="Показать на карте" />
      <div className="ml-[29px] h-px w-[182px] shrink-0 bg-[#505356]" />
      <MenuItem h="h-[32px]" icon={<Pin color="#00a80c" />} label="Запросить координаты" />
      <MenuItem h="h-[23px]" label="Переустановить интервал GPS" />
      <MenuItem h="h-[29px]" label="Настроить GPS модуль" />
    </div>
  );
}

function UserMenu() {
  return (
    <div className="absolute left-[1683px] top-[57px] flex h-[139px] w-[180px] flex-col rounded border border-black bg-[#32383f] pt-px text-[12.5px] tracking-[-0.3px] text-[#dedede]">
      <MenuItem h="h-[26px]" icon={<Tools />} label="Настройки" />
      <MenuItem h="h-[26px]" icon={<QuestionIcon bg="bg-[#b0b0b0]" fg="text-[#00f0ff]" />} label="Справка" />
      <MenuItem h="h-[26px]" icon={<Cross size={12} color="#e53030" />} label="Отчет об ошибке" />
      <MenuItem h="h-[26px]" label="О программе" />
      <div className="ml-[29px] mt-[2px] h-px w-[137px] shrink-0 bg-[#505356]" />
      <MenuItem h="h-[29px] pt-[5px]" label="Выход" />
    </div>
  );
}

function Cursor() {
  return (
    <svg width="16" height="24" viewBox="0 0 16 24" className="absolute left-[315px] top-[567px]">
      <path d="M1 1V17.500L4.800 14L7.600 21.500L11 20L8 13H13Z" fill="#111" stroke="#e8e8e8" strokeWidth="1" />
    </svg>
  );
}

export default function App() {
  return (
    <div className="relative flex h-[1080px] w-[1920px] flex-col overflow-hidden bg-[#080f18] font-['Noto_Sans',sans-serif]">
      <TopBar />
      <div className="flex h-[1024px]">
        <Rail />
        <div className="w-[2px] shrink-0 bg-[#101114]"><div className="h-[108px] bg-[#00b41c]" /></div>
        <Subscribers />
        <RecentCalls />
        <Desktop />
      </div>
      <ContextMenu />
      <UserMenu />
      <Cursor />
    </div>
  );
}
